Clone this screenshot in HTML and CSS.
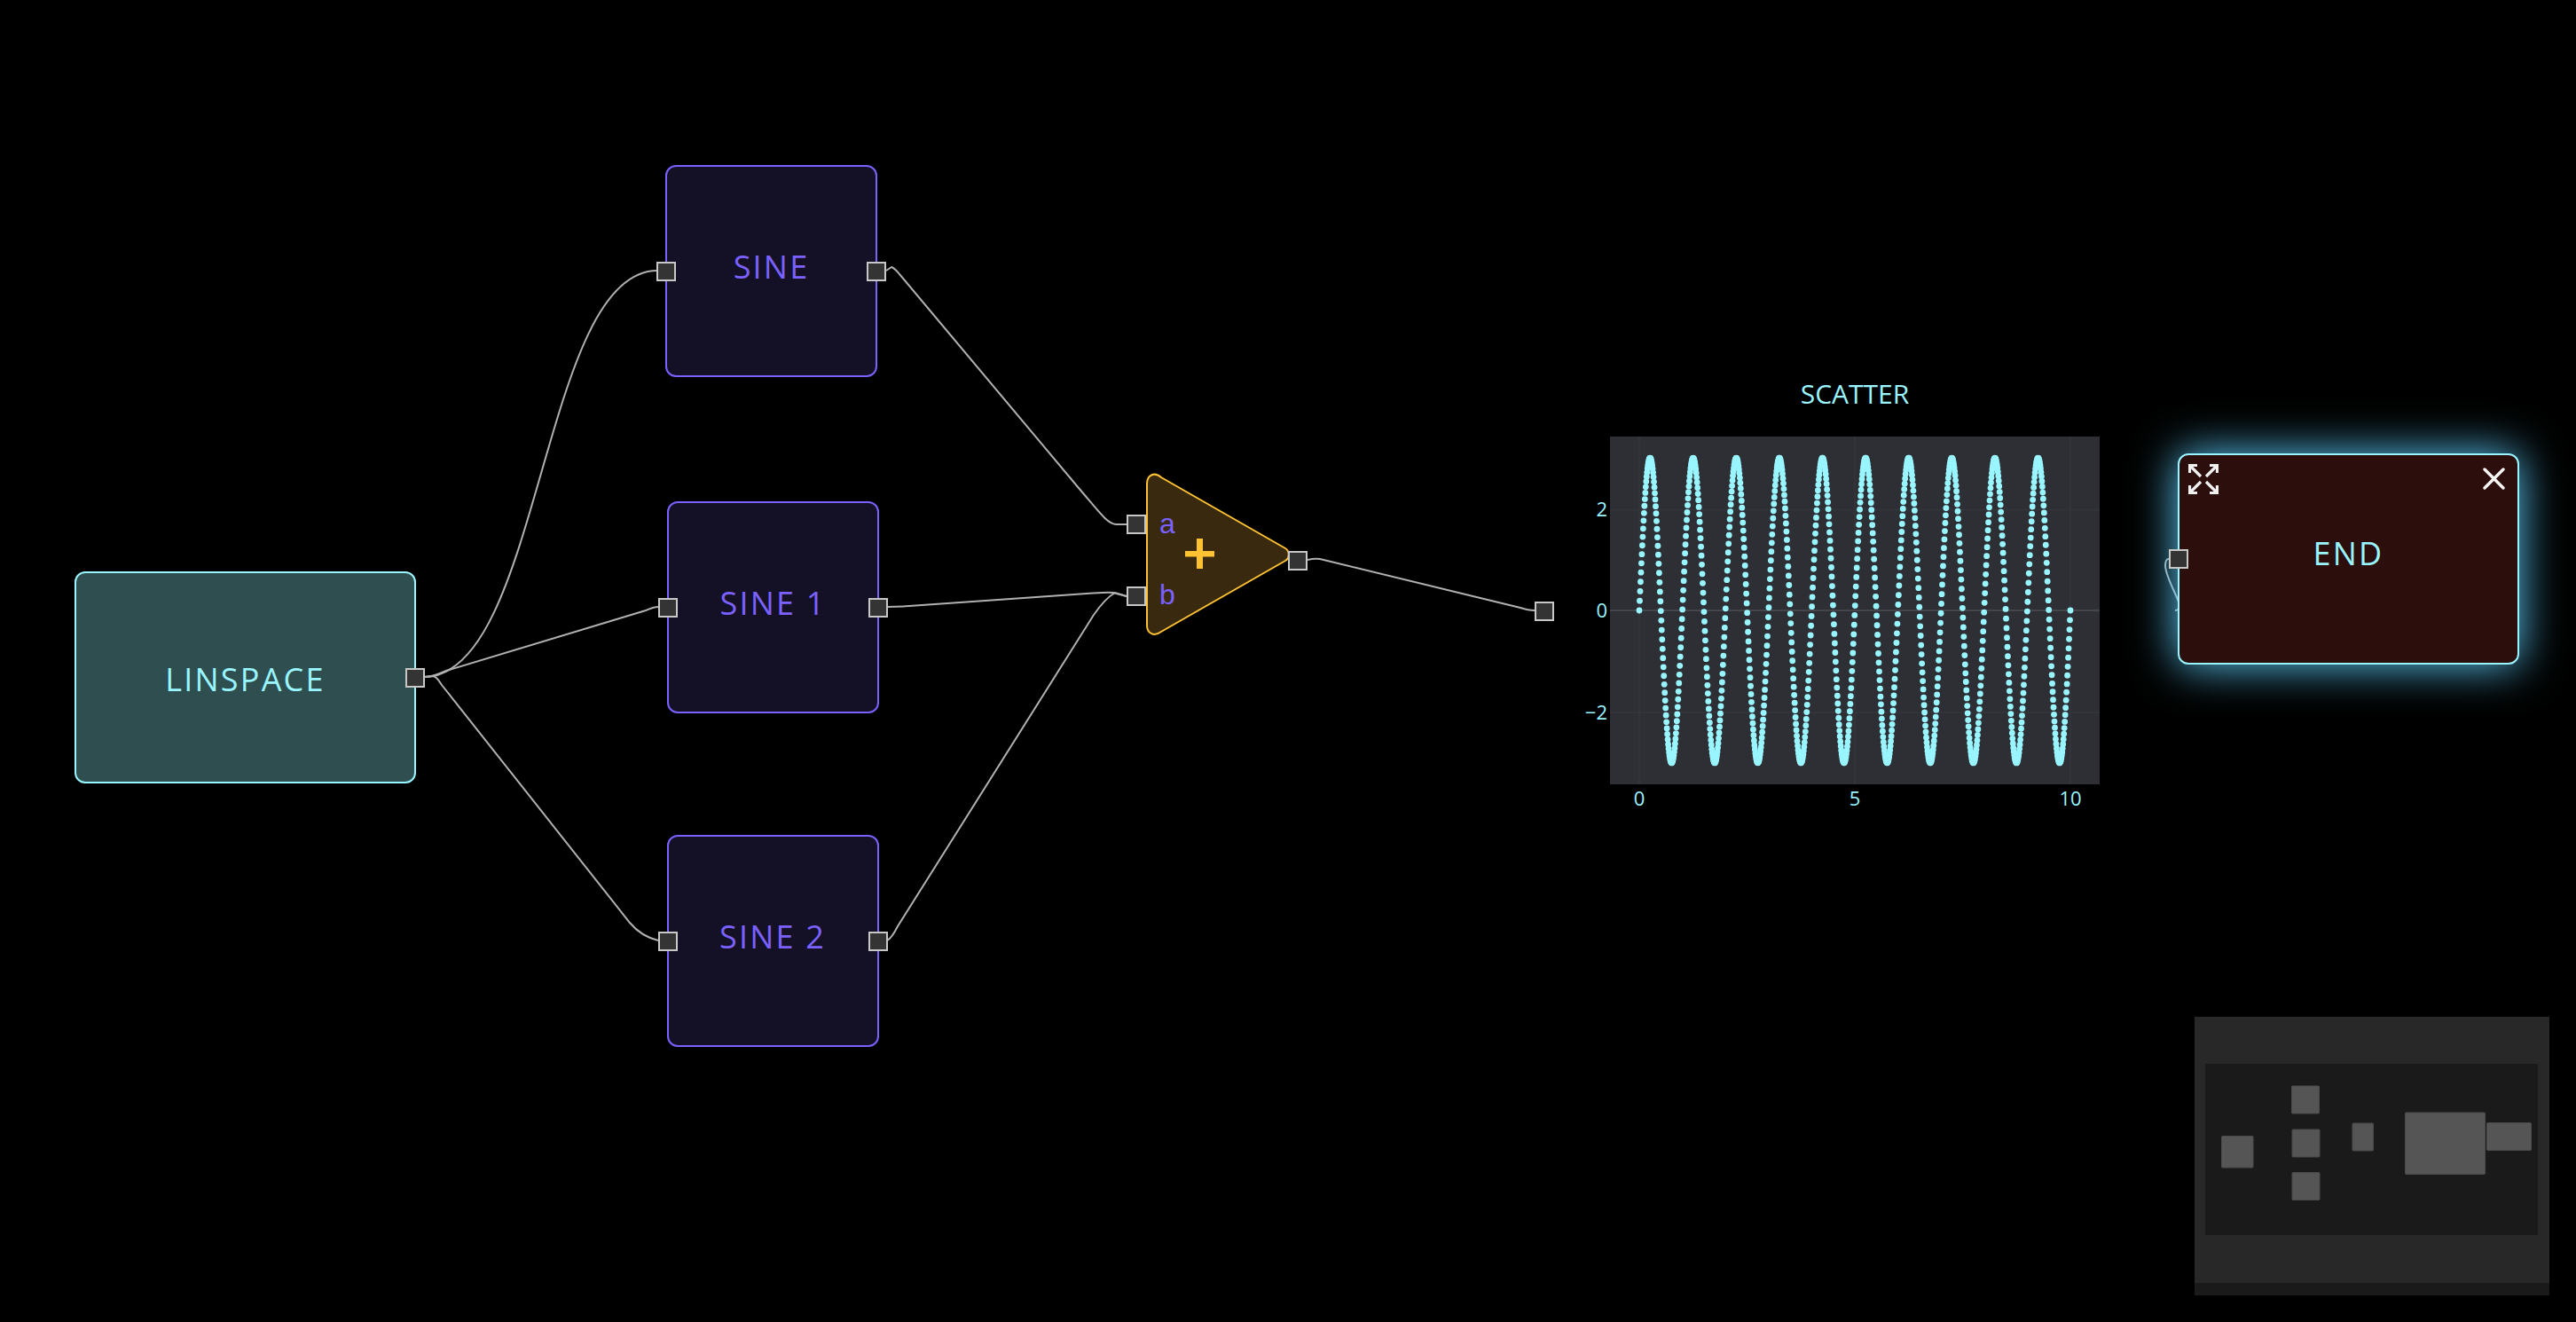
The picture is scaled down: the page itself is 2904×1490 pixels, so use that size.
FILE: index.html
```html
<!DOCTYPE html>
<html lang="en">
<head>
    <meta charset="UTF-8">
    <title>Flow chart</title>
    <link rel="stylesheet" href="styles.css">
</head>
<body>
<div id="canvas">
    <svg class="edges" width="2904" height="1490">
        <path d="M478 763 C610 763 610 305 741 305"/>
        <path d="M478 763 C488 763 492 760 503 756 L728 688 C733 686 737 684 742 684"/>
        <path d="M478 763 L488 762 C492 763 494 766 498 772 L710 1040 C720 1052 730 1057 742 1060"/>
        <path d="M999 305 L1005 301 C1008 302 1010 304 1014 309 L1216 550 C1240 578 1248 590 1258 591 L1270 591"/>
        <path d="M1000 684 C1010 684 1015 684 1025 683 L1225 669 C1240 668 1250 667 1255 668 L1270 672"/>
        <path d="M1000 1060 C1004 1058 1007 1054 1012 1044 L1233 693 C1242 680 1250 672 1257 668 L1270 672"/>
        <path d="M1474 631 C1478 630 1482 629 1488 630 L1714 685 C1720 687 1725 688 1730 688"/>
        <path d="M2452 688 C2456 688 2457 686 2457 682 C2456 674 2442 652 2441 638 C2441 632 2442 630 2445 630"/>
    </svg>

    <div class="node node-linspace">
        <span class="label">LINSPACE</span>
        <span class="port port-out"></span>
    </div>

    <div class="node node-sine sine-0">
        <span class="port port-in"></span>
        <span class="label">SINE</span>
        <span class="port port-out"></span>
    </div>
    <div class="node node-sine sine-1">
        <span class="port port-in"></span>
        <span class="label">SINE 1</span>
        <span class="port port-out"></span>
    </div>
    <div class="node node-sine sine-2">
        <span class="port port-in"></span>
        <span class="label">SINE 2</span>
        <span class="port port-out"></span>
    </div>

    <div class="node-add">
        <svg class="tri" width="162" height="190">
            <path class="tri-shape" d="M1 15 C1 6 9 1 17 8 L157 88 C162 91 162 99 157 102 L17 182 C9 188 1 184 1 175 Z"/>
            <rect class="tri-plus" x="44" y="91" width="33" height="6.5"/>
            <rect class="tri-plus" x="57" y="77" width="7" height="34"/>
        </svg>
        <span class="port port-a"></span>
        <span class="port port-b"></span>
        <span class="port port-sum"></span>
        <span class="pin pin-a">a</span>
        <span class="pin pin-b">b</span>
    </div>

    <div class="node-scatter">
        <div class="scatter-title">SCATTER</div>
        <svg id="plot" class="plot" width="642" height="440">
            <rect class="plot-bg" x="45" y="12" width="552" height="392"/>
            <path class="plot-grid" d="M78 12 V404 M321 12 V404 M564 12 V404 M45 94.5 H597 M45 323 H597"/>
            <path class="plot-zero" d="M45 208 H597"/>
            <text class="tick tick-y" x="42" y="102">2</text>
            <text class="tick tick-y" x="42" y="216">0</text>
            <text class="tick tick-y" x="42" y="331">&#8722;2</text>
            <text class="tick" x="78" y="428">0</text>
            <text class="tick" x="321" y="428">5</text>
            <text class="tick" x="564" y="428">10</text>
        </svg>
        <span class="port port-plot"></span>
    </div>

    <div class="node node-end">
        <svg class="icon-expand" width="34" height="34" viewBox="0 0 34 34">
            <path d="M1.5 10 V1.5 H10 M3 3 L14 14"/>
            <path d="M24 1.5 H32.5 V10 M31 3 L20 14"/>
            <path d="M1.5 24 V32.5 H10 M3 31 L14 20"/>
            <path d="M32.5 24 V32.5 H24 M31 31 L20 20"/>
        </svg>
        <svg class="icon-close" width="25" height="25" viewBox="0 0 25 25">
            <path d="M2 2 L23 23 M23 2 L2 23"/>
        </svg>
        <span class="port port-in"></span>
        <span class="label">END</span>
    </div>

    <svg class="minimap" width="400" height="314">
        <rect class="map-mask" width="400" height="314"/>
        <rect class="map-view" x="12" y="53" width="375" height="193"/>
        <rect class="map-view" x="0" y="300" width="400" height="14"/>
        <rect class="map-node" x="30.5" y="134.5" width="35.5" height="35.5" rx="1"/>
        <rect class="map-node" x="109.5" y="78" width="31" height="31" rx="1"/>
        <rect class="map-node" x="110" y="127" width="31" height="31" rx="1"/>
        <rect class="map-node" x="110" y="175.5" width="31" height="31" rx="1"/>
        <rect class="map-node" x="178" y="120" width="23.5" height="31" rx="1"/>
        <rect class="map-node" x="237.5" y="108" width="90" height="69.5" rx="1"/>
        <rect class="map-node" x="329.5" y="119.5" width="50" height="31" rx="1"/>
    </svg>
</div>

<script src="scatter.js"></script>
</body>
</html>
```

FILE: styles.css
```css
* {
    box-sizing: border-box;
    padding: 0;
    margin: 0;
}
body {
    background-color: #000;
    font-family: "Open Sans", "Noto Sans", sans-serif;
    overflow: hidden;
}
#canvas {
    position: relative;
    width: 2904px;
    height: 1490px;
}

/* edges */
.edges {
    position: absolute;
    left: 0;
    top: 0;
}
.edges path {
    fill: none;
    stroke: #b1b1b1;
    stroke-width: 2;
}

/* nodes */
.node {
    position: absolute;
    display: flex;
    align-items: center;
    justify-content: center;
    height: 239px;
    border: 2px solid;
    border-radius: 12px;
}
.label {
    font-size: 36px;
    font-weight: 500;
    letter-spacing: 2.2px;
    white-space: pre;
}
.node-linspace {
    left: 84px;
    top: 644px;
    width: 385px;
    padding-top: 4px;
    color: #99f5ff;
    border-color: #99f5ff;
    background-color: #2f4e50;
}
.node-sine {
    width: 239px;
    padding-bottom: 11px;
    color: #7b61ff;
    border-color: #7b61ff;
    background-color: #141127;
}
.sine-0 {
    left: 750px;
    top: 186px;
}
.sine-1 {
    left: 752px;
    top: 565px;
}
.sine-2 {
    left: 751.5px;
    top: 941px;
}
.node-end {
    left: 2455px;
    top: 511px;
    width: 385px;
    height: 238px;
    padding-bottom: 13px;
    color: #99f5ff;
    border-color: #99f5ff;
    background-color: #2c0e0c;
    box-shadow: 0 0 50px #60d0ff;
    z-index: 2;
}

/* ports */
.port {
    position: absolute;
    width: 22px;
    height: 22px;
    border: 2px solid #c8c8c8;
    background-color: #343434;
}
.port-in {
    left: -12px;
    top: 50%;
    margin-top: -11px;
}
.port-out {
    right: -12px;
    top: 50%;
    margin-top: -11px;
}
.port-a {
    left: -22px;
    top: 50px;
}
.port-b {
    left: -22px;
    top: 131px;
}
.port-sum {
    left: 160px;
    top: 91px;
}
.port-plot {
    left: -40px;
    top: 264px;
}

/* add node */
.node-add {
    position: absolute;
    left: 1292px;
    top: 530px;
    width: 162px;
    height: 190px;
}
.tri {
    display: block;
    overflow: visible;
}
.tri-shape {
    fill: #38290f;
    stroke: #ffc233;
    stroke-width: 2;
}
.tri-plus {
    fill: #ffc233;
}
.pin {
    position: absolute;
    left: 15px;
    color: #7b61ff;
    font-family: "Liberation Sans", sans-serif;
    font-size: 32px;
    line-height: 32px;
}
.pin-a {
    top: 44px;
}
.pin-b {
    top: 124px;
}

/* scatter */
.node-scatter {
    position: absolute;
    left: 1770px;
    top: 414px;
    width: 642px;
}
.scatter-title {
    height: 66px;
    line-height: 60px;
    text-align: center;
    color: #99f5ff;
    font-size: 30px;
}
.plot {
    display: block;
}
.plot-bg {
    fill: #2e2f34;
}
.plot-grid {
    fill: none;
    stroke: #333439;
    stroke-width: 2;
}
.plot-zero {
    fill: none;
    stroke: #45464b;
    stroke-width: 2;
}
.plot-dots circle {
    fill: #99f5ff;
}
.tick {
    fill: #99f5ff;
    font-size: 22px;
    text-anchor: middle;
}
.tick-y {
    text-anchor: end;
}

/* end node icons */
.icon-expand {
    position: absolute;
    left: 10px;
    top: 10px;
}
.icon-expand path {
    fill: none;
    stroke: #f0f0f0;
    stroke-width: 3.2;
}
.icon-close {
    position: absolute;
    right: 14px;
    top: 14px;
}
.icon-close path {
    fill: none;
    stroke: #f5f5f5;
    stroke-width: 3.4;
    stroke-linecap: round;
}

/* minimap */
.minimap {
    position: absolute;
    left: 2474px;
    top: 1146px;
}
.map-mask {
    fill: #282828;
}
.map-view {
    fill: #1a1a1a;
}
.map-node {
    fill: #555;
    stroke: #4a4a4a;
    stroke-width: 1;
}
```

FILE: scatter.js
```js
window.onload = function () {
    var plot = document.getElementById('plot');
    var ns = 'http://www.w3.org/2000/svg';
    var dots = document.createElementNS(ns, 'g');
    dots.setAttribute('class', 'plot-dots');

    // y = 3 sin(2 pi x), x from 0 to 10
    var count = 1000;
    for (var i = 0; i < count; i++) {
        var x = i * 10 / (count - 1);
        var y = 3 * Math.sin(2 * Math.PI * x);
        var dot = document.createElementNS(ns, 'circle');
        dot.setAttribute('cx', 78 + x * 48.6);
        dot.setAttribute('cy', 208 - y * 57.3);
        dot.setAttribute('r', 3.4);
        dots.appendChild(dot);
    }
    plot.appendChild(dots);
}
```
